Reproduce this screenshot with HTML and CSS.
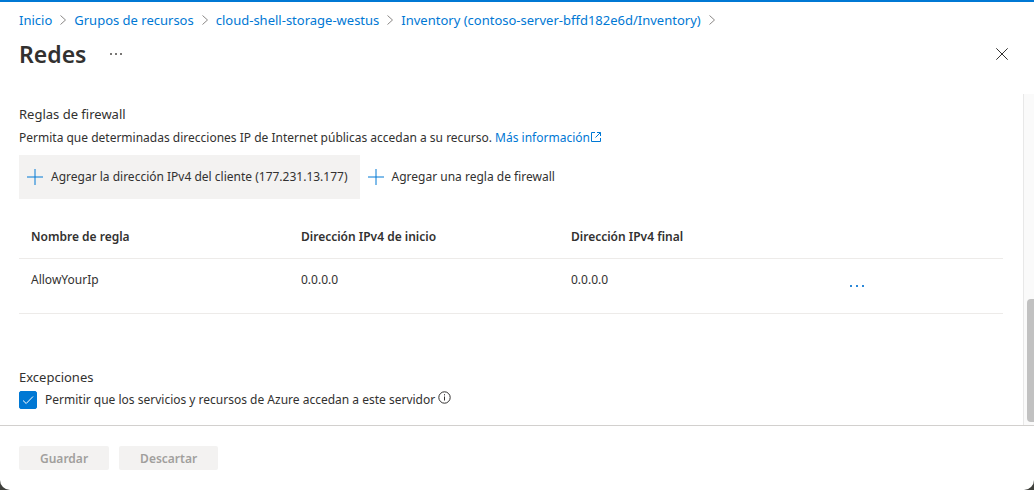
FILE: index.html
```html
<!DOCTYPE html>
<html lang="es">
<head>
<meta charset="utf-8">
<meta name="viewport" content="width=device-width, initial-scale=1">
<title>Redes</title>
<link rel="stylesheet" href="styles.css">
</head>
<body>
<div class="blade">
  <header class="header">
    <nav class="breadcrumb" aria-label="Ruta">
      <a href="#">Inicio</a>
      <svg class="chevron" viewBox="0 0 6 10"><path d="M.5.5 5.5 5 .5 9.500"/></svg>
      <a href="#">Grupos de recursos</a>
      <svg class="chevron" viewBox="0 0 6 10"><path d="M.5.5 5.5 5 .5 9.500"/></svg>
      <a href="#">cloud-shell-storage-westus</a>
      <svg class="chevron" viewBox="0 0 6 10"><path d="M.5.5 5.5 5 .5 9.500"/></svg>
      <a href="#">Inventory (contoso-server-bffd182e6d/Inventory)</a>
      <svg class="chevron" viewBox="0 0 6 10"><path d="M.5.5 5.5 5 .5 9.500"/></svg>
    </nav>
    <div class="title-row">
      <h1 class="title">Redes</h1>
      <button class="icon-button" type="button" aria-label="Más opciones">
        <svg width="12" height="2" viewBox="0 0 12 2" fill="#797775"><path d="M0 0h2v2H0zM5 0h2v2H5zM10 0h2v2h-2z"/></svg>
      </button>
      <button class="icon-button close" type="button" aria-label="Cerrar">
        <svg width="12" height="12" viewBox="0 0 12 12" fill="none" stroke="#323130"><path d="M.3.3l11.400 11.400M11.700.3.3 11.700"/></svg>
      </button>
    </div>
  </header>

  <div class="body">
    <main class="content">
      <section class="firewall">
        <h2 class="heading">Reglas de firewall</h2>
        <p class="description">Permita que determinadas direcciones IP de Internet públicas accedan a su recurso. <a href="#">Más información<svg class="external" viewBox="0 0 10 10"><path d="M4 .5H.5v9h9V6M6 .5h3.500V4M9.500.5 4.500 5.500"/></svg></a></p>
        <div class="commands">
          <button class="command active" type="button">
            <svg class="plus" viewBox="0 0 16 16"><path d="M8 0v16M0 8h16"/></svg>
            <span>Agregar la dirección IPv4 del cliente (177.231.13.177)</span>
          </button>
          <button class="command" type="button">
            <svg class="plus" viewBox="0 0 16 16"><path d="M8 0v16M0 8h16"/></svg>
            <span>Agregar una regla de firewall</span>
          </button>
        </div>
        <table class="rules">
          <thead>
            <tr><th scope="col">Nombre de regla</th><th scope="col">Dirección IPv4 de inicio</th><th scope="col">Dirección IPv4 final</th><td></td></tr>
          </thead>
          <tbody>
            <tr>
              <td>AllowYourIp</td><td>0.0.0.0</td><td>0.0.0.0</td>
              <td class="actions"><button class="icon-button" type="button" aria-label="Acciones de la regla"><svg width="14" height="2" viewBox="0 0 14 2" fill="#2b88d8"><path d="M0 0h2v2H0zM6 0h2v2H6zM12 0h2v2h-2z"/></svg></button></td>
            </tr>
          </tbody>
        </table>
      </section>
      <section>
        <h2 class="heading">Excepciones</h2>
        <div class="option">
          <input class="checkbox" type="checkbox" id="azure" checked>
          <svg class="check" viewBox="0 0 18 18"><path d="M4 9.500 7.200 12.500 14 5.500"/></svg>
          <label for="azure">Permitir que los servicios y recursos de Azure accedan a este servidor</label>
          <svg class="info" viewBox="0 0 13 13"><circle cx="6.500" cy="6.500" r="5.700"/><path d="M6.500 5.500v4M6.500 3.200v1.200"/></svg>
        </div>
      </section>
    </main>
    <div class="scrollbar"><div class="thumb"></div></div>
  </div>

  <footer class="footer">
    <button class="action" type="button" disabled>Guardar</button>
    <button class="action" type="button" disabled>Descartar</button>
  </footer>
</div>
</body>
</html>
```

FILE: styles.css
```css
* {
  box-sizing: border-box;
}

body {
  margin: 0;
  background: #3f403c;
  color: #323130;
  font: 12px/20px "Segoe UI", "Noto Sans", sans-serif;
}

a {
  color: #0078d4;
  text-decoration: none;
}

button {
  font: inherit;
  color: inherit;
  border: 0;
  background: none;
  padding: 0;
}

svg {
  flex: none;
}

.blade {
  display: flex;
  flex-direction: column;
  min-height: 100vh;
  background: #fff;
  border-top: 2px solid #0078d4;
  border-radius: 0 0 10px 10px;
}

.header {
  padding: 8px 20px 24px 19px;
}

.breadcrumb {
  display: flex;
  flex-wrap: wrap;
  align-items: center;
  column-gap: 8px;
  font-size: 13px;
}

.chevron {
  width: 6px;
  height: 10px;
  fill: none;
  stroke: #8a8886;
}

.title-row {
  display: flex;
  align-items: center;
  padding-top: 8px;
}

.title {
  margin: 0 18px 0 0;
  font-size: 23px;
  line-height: 32px;
  font-weight: 600;
}

.icon-button {
  display: inline-flex;
  align-items: center;
  justify-content: center;
  width: 24px;
  height: 24px;
}

.close {
  margin-left: auto;
}

.body {
  display: flex;
  flex: 1;
}

.content {
  flex: 1;
  min-width: 0;
  padding: 10px 20px 15px 19px;
}

.firewall {
  margin-bottom: 53px;
}

.heading {
  margin: 0;
  font-size: 13px;
  line-height: 20px;
  font-weight: 400;
}

.description {
  margin: 4px 0 7px;
}

.external {
  width: 10px;
  height: 10px;
  margin-left: 1px;
  fill: none;
  stroke: #0078d4;
}

.commands {
  display: flex;
  flex-wrap: wrap;
}

.command {
  display: flex;
  align-items: center;
  gap: 8px;
  height: 44px;
  padding: 0 8px;
}

.active {
  padding-right: 12px;
  background: #f3f2f1;
}

.plus {
  width: 16px;
  height: 16px;
  fill: none;
  stroke: #0078d4;
}

.rules {
  width: 100%;
  margin-top: 15px;
  table-layout: fixed;
  border-collapse: collapse;
  text-align: left;
}

.rules th,
.rules td {
  height: 44px;
  padding: 0 12px;
  border-bottom: 1px solid #edebe9;
}

.rules th {
  width: 270px;
  padding-top: 2px;
  font-weight: 600;
}

.rules tbody td {
  height: 55px;
  padding-bottom: 12px;
}

.rules .actions {
  padding: 0 16px;
}

.option {
  display: flex;
  align-items: center;
  position: relative;
  margin-top: 3px;
}

.checkbox {
  appearance: none;
  width: 18px;
  height: 18px;
  margin: 0 8px 0 0;
  border: 1px solid #323130;
  border-radius: 2px;
  background: #fff;
}

.checkbox:checked {
  border-color: #0078d4;
  background: #0078d4;
}

.check {
  position: absolute;
  left: 0;
  width: 18px;
  height: 18px;
  fill: none;
  stroke: #fff;
  pointer-events: none;
}

.info {
  width: 13px;
  height: 13px;
  margin: 0 0 4px 3px;
  fill: none;
  stroke: #323130;
}

.scrollbar {
  width: 11px;
  padding-left: 3px;
  background: #fafafa;
  border-left: 1px solid #e8e8e8;
}

.thumb {
  position: relative;
  top: 62%;
  height: 37%;
  border-radius: 4px 0 0 4px;
  background: #c1c1c1;
}

.footer {
  display: flex;
  gap: 10px;
  padding: 20px 19px;
  border-top: 1px solid #d2d0ce;
}

.action {
  height: 24px;
  padding: 2px 21px 0;
  border-radius: 2px;
  background: #f3f2f1;
  color: #a19f9d;
  font-weight: 600;
}
```
